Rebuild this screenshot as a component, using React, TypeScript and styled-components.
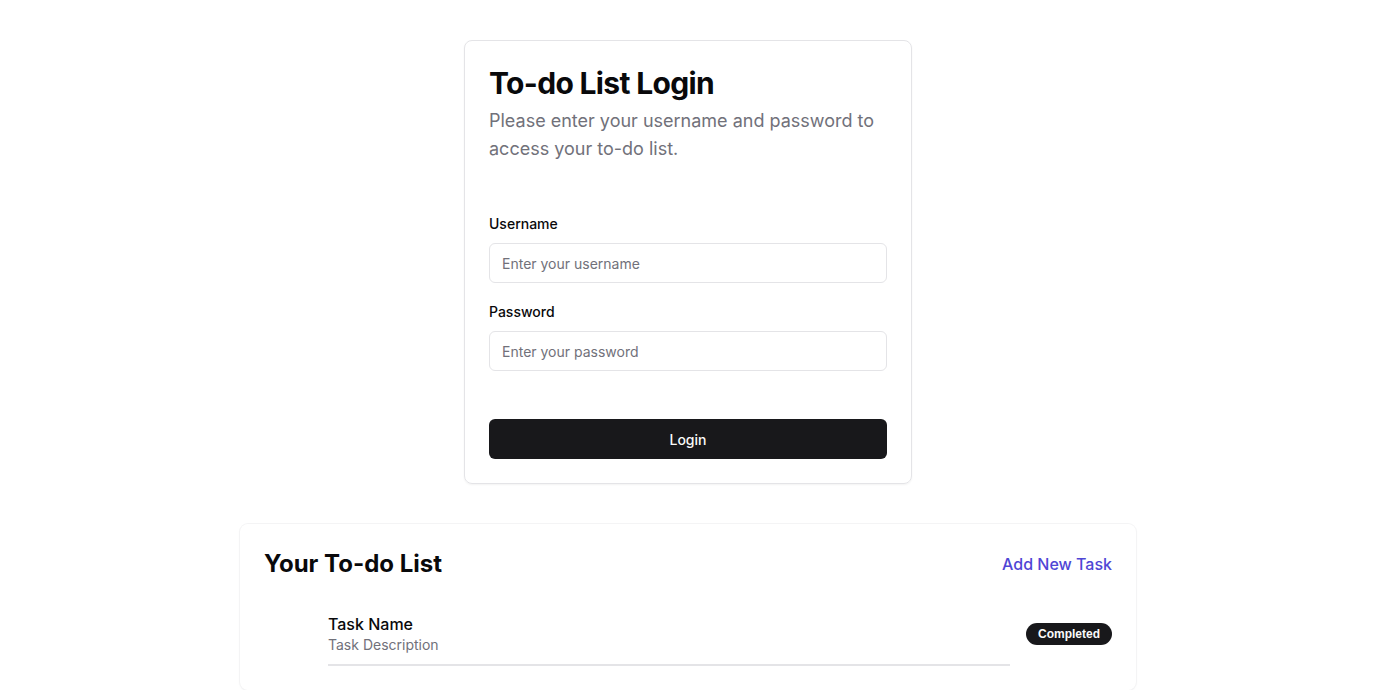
import React from "react";
import styled, { createGlobalStyle } from "styled-components";

const Global = createGlobalStyle`
  * { box-sizing: border-box; }
  body {
    margin: 0;
    background: #ffffff;
    font-family: Inter, "Noto Sans", sans-serif;
    color: #09090b;
  }
`;

const Page = styled.main`
  display: flex;
  flex-direction: column;
  align-items: center;
  padding-top: 40px;
  gap: 40px;
`;

const LoginCard = styled.section`
  width: 448px;
  border: 1px solid #e4e4e7;
  border-radius: 8px;
  box-shadow: 0 1px 2px rgba(0, 0, 0, 0.05);
  padding: 24px;
  display: flex;
  flex-direction: column;
`;

const Title = styled.h1`
  margin: 0;
  font-size: 30px;
  line-height: 36px;
  font-weight: 700;
  letter-spacing: -0.022em;
`;

const Subtitle = styled.p`
  margin: 6px 0 0;
  font-size: 18px;
  line-height: 28px;
  color: #71717a;
`;

const Form = styled.form`
  margin-top: 51px;
  display: flex;
  flex-direction: column;
`;

const Field = styled.div<{ $first?: boolean }>`
  display: flex;
  flex-direction: column;
  gap: 9px;
  margin-top: ${(p) => (p.$first ? "0" : "19px")};
`;

const Label = styled.label`
  font-size: 14px;
  line-height: 20px;
  font-weight: 500;
  color: #09090b;
`;

const Input = styled.input`
  height: 40px;
  width: 100%;
  border: 1px solid #e4e4e7;
  border-radius: 6px;
  padding: 0 12px;
  font-family: Inter, "Noto Sans", sans-serif;
  font-size: 14px;
  color: #09090b;
  background: #fff;
  outline: none;
  &::placeholder { color: #71717a; }
`;

const PrimaryButton = styled.button`
  margin-top: 48px;
  height: 40px;
  width: 100%;
  border: none;
  border-radius: 6px;
  background: #18181b;
  color: #fafafa;
  font-family: Inter, "Noto Sans", sans-serif;
  font-size: 14px;
  font-weight: 500;
  cursor: pointer;
`;

const ListCard = styled.section`
  width: 896px;
  border-radius: 8px;
  box-shadow: 0 0 0 1px #f4f4f5, 0 1px 3px rgba(0, 0, 0, 0.04);
  padding: 24px;
`;

const ListHeader = styled.div`
  display: flex;
  align-items: center;
  justify-content: space-between;
`;

const ListTitle = styled.h2`
  margin: 0;
  font-size: 24px;
  line-height: 32px;
  font-weight: 700;
`;

const AddLink = styled.a`
  font-size: 16px;
  line-height: 24px;
  font-weight: 500;
  color: #4f46d5;
  text-decoration: none;
  cursor: pointer;
`;

const TaskRow = styled.div`
  margin-top: 32px;
  padding-left: 64px;
  display: flex;
  align-items: flex-start;
  gap: 16px;
`;

const TaskBody = styled.div`
  flex: 1;
  padding-bottom: 10px;
  border-bottom: 2px solid #e4e4e7;
  display: flex;
  flex-direction: column;
`;

const TaskName = styled.span`
  font-size: 16px;
  line-height: 24px;
  font-weight: 500;
  color: #09090b;
`;

const TaskDesc = styled.span`
  font-size: 14px;
  line-height: 18px;
  color: #71717a;
`;

const Badge = styled.span`
  margin-top: 11px;
  display: inline-flex;
  align-items: center;
  height: 22px;
  padding: 0 12px;
  border-radius: 999px;
  background: #18181b;
  color: #fafafa;
  font-family: "Liberation Sans", Arial, sans-serif;
  font-size: 12px;
  font-weight: 700;
`;

export default function App() {
  return (
    <>
      <Global />
      <Page>
        <LoginCard>
          <Title>To-do List Login</Title>
          <Subtitle>
            Please enter your username and password to access your to-do list.
          </Subtitle>
          <Form onSubmit={(e) => e.preventDefault()}>
            <Field $first>
              <Label htmlFor="username">Username</Label>
              <Input id="username" placeholder="Enter your username" />
            </Field>
            <Field>
              <Label htmlFor="password">Password</Label>
              <Input id="password" type="password" placeholder="Enter your password" />
            </Field>
            <PrimaryButton type="submit">Login</PrimaryButton>
          </Form>
        </LoginCard>
        <ListCard>
          <ListHeader>
            <ListTitle>Your To-do List</ListTitle>
            <AddLink>Add New Task</AddLink>
          </ListHeader>
          <TaskRow>
            <TaskBody>
              <TaskName>Task Name</TaskName>
              <TaskDesc>Task Description</TaskDesc>
            </TaskBody>
            <Badge>Completed</Badge>
          </TaskRow>
        </ListCard>
      </Page>
    </>
  );
}
